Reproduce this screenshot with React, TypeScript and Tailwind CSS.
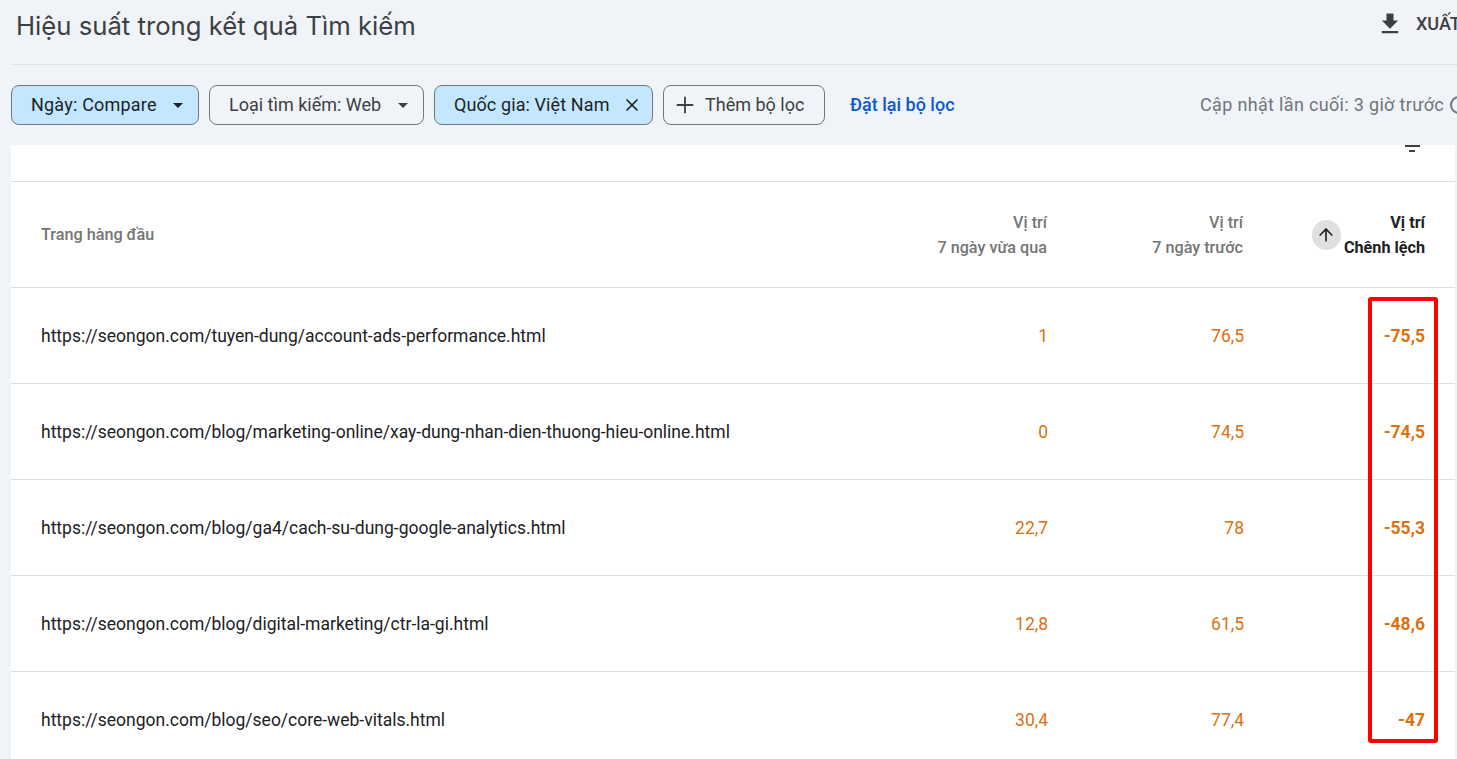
import React from 'react';
import { ArrowUp, Plus, X } from 'lucide-react';

const rows = [
  { url: 'https://seongon.com/tuyen-dung/account-ads-performance.html', cur: '1', prev: '76,5', diff: '-75,5' },
  { url: 'https://seongon.com/blog/marketing-online/xay-dung-nhan-dien-thuong-hieu-online.html', cur: '0', prev: '74,5', diff: '-74,5' },
  { url: 'https://seongon.com/blog/ga4/cach-su-dung-google-analytics.html', cur: '22,7', prev: '78', diff: '-55,3' },
  { url: 'https://seongon.com/blog/digital-marketing/ctr-la-gi.html', cur: '12,8', prev: '61,5', diff: '-48,6' },
  { url: 'https://seongon.com/blog/seo/core-web-vitals.html', cur: '30,4', prev: '77,4', diff: '-47' },
];

const Caret = () => (
  <svg width="10" height="5" viewBox="0 0 10 5" className="fill-current">
    <path d="M0 0h10L5 5z" />
  </svg>
);

const App: React.FC = () => {
  return (
    <div className="relative h-screen overflow-hidden bg-[#f0f4f8] font-['Roboto',sans-serif]">
      <div className="ml-[11px] flex h-[65px] items-start justify-between border-b border-[#dfe3e6]">
        <h1 className="ml-[5px] mt-[9px] whitespace-nowrap font-['Inter',sans-serif] text-[25.7px] leading-[34px] text-[#3c4043]">
          Hiệu suất trong kết quả Tìm kiếm
        </h1>
        <div className="flex w-[80px] shrink-0 items-center gap-[12px] overflow-hidden pt-[10px] text-[#3c4043]">
          <svg width="28" height="28" viewBox="0 0 24 24" className="-ml-[1px] shrink-0 fill-current">
            <path d="M19 9h-4V3H9v6H5l7 7 7-7zM5 18v2h14v-2H5z" />
          </svg>
          <span className="whitespace-nowrap text-[18px] font-medium leading-[28px]">XUẤT</span>
        </div>
      </div>

      <div className="ml-[11px] flex h-[80px] items-center text-[18px] leading-[24px]">
        <div className="flex h-[40px] w-[188px] items-center justify-between rounded-[8px] border border-[#747775] bg-[#c2e7ff] pl-[19px] pr-[15px] text-[#1f1f1f]">
          <span className="tracking-[0.2px]">Ngày: Compare</span>
          <Caret />
        </div>
        <div className="ml-[10px] flex h-[40px] w-[215px] items-center justify-between rounded-[8px] border border-[#747775] pl-[19px] pr-[15px] text-[#3c4043]">
          <span>Loại tìm kiếm: Web</span>
          <Caret />
        </div>
        <div className="ml-[10px] flex h-[40px] w-[219px] items-center justify-between rounded-[8px] border border-[#747775] bg-[#c2e7ff] pl-[19px] pr-[10px] text-[#1f1f1f]">
          <span className="tracking-[0.1px]">Quốc gia: Việt Nam</span>
          <X size={20} strokeWidth={2} />
        </div>
        <div className="ml-[10px] flex h-[40px] w-[162px] items-center rounded-[8px] border border-[#747775] pl-[8px] text-[#3c4043]">
          <Plus size={26} strokeWidth={1.7} />
          <span className="ml-[7px]">Thêm bộ lọc</span>
        </div>
        <span className="ml-[25px] font-medium text-[#0b57d0]">Đặt lại bộ lọc</span>
        <div className="ml-auto flex w-[257px] shrink-0 items-center overflow-hidden whitespace-nowrap tracking-[0.33px] text-[#70757a]">
          <span>Cập nhật lần cuối: 3 giờ trước</span>
          <span className="ml-[6px] h-[18px] w-[18px] shrink-0 rounded-full border-2 border-[#70757a]" />
        </div>
      </div>

      <div className="ml-[11px] mr-[2px] bg-white">
        <div className="flex h-[37px] justify-end border-b border-[#e0e0e0] pr-[35px]">
          <div className="flex h-[10px] w-[16px] flex-col items-center gap-[3px]">
            <div className="h-[2px] w-[15px] bg-[#3c4043]" />
            <div className="h-[2px] w-[6px] bg-[#3c4043]" />
          </div>
        </div>

        <div className="flex h-[106px] items-center border-b border-[#e0e0e0] text-[16.2px] font-medium leading-[25px] text-[#757575]">
          <div className="flex-1 pl-[30px]">Trang hàng đầu</div>
          <div className="w-[200px] pr-[1px] text-right">
            <div>Vị trí</div>
            <div>7 ngày vừa qua</div>
          </div>
          <div className="w-[196px] pr-[1px] text-right">
            <div>Vị trí</div>
            <div>7 ngày trước</div>
          </div>
          <div className="flex w-[211px] items-center justify-end pr-[30px]">
            <div className="mr-[3px] flex h-[30px] w-[29px] items-center justify-center rounded-full bg-[#e0e0e0]">
              <ArrowUp size={20} className="text-[#202124]" />
            </div>
            <div className="text-right font-bold text-[#202124]">
              <div>Vị trí</div>
              <div>Chênh lệch</div>
            </div>
          </div>
        </div>

        {rows.map((row) => (
          <div key={row.url} className="flex h-[96px] items-center border-b border-[#e0e0e0] pt-[2px] text-[17.5px]">
            <div className="flex-1 pl-[30px] text-[#202124]">{row.url}</div>
            <div className="w-[200px] text-right text-[#dd7110]">{row.cur}</div>
            <div className="w-[196px] text-right text-[#dd7110]">{row.prev}</div>
            <div className="w-[211px] pr-[30px] text-right font-bold text-[#dd7110]">{row.diff}</div>
          </div>
        ))}
      </div>

      <div className="absolute left-[1368px] top-[297px] h-[446px] w-[70px] rounded-[3px] border-[4px] border-[#ff0000]" />
    </div>
  );
};

export default App;
